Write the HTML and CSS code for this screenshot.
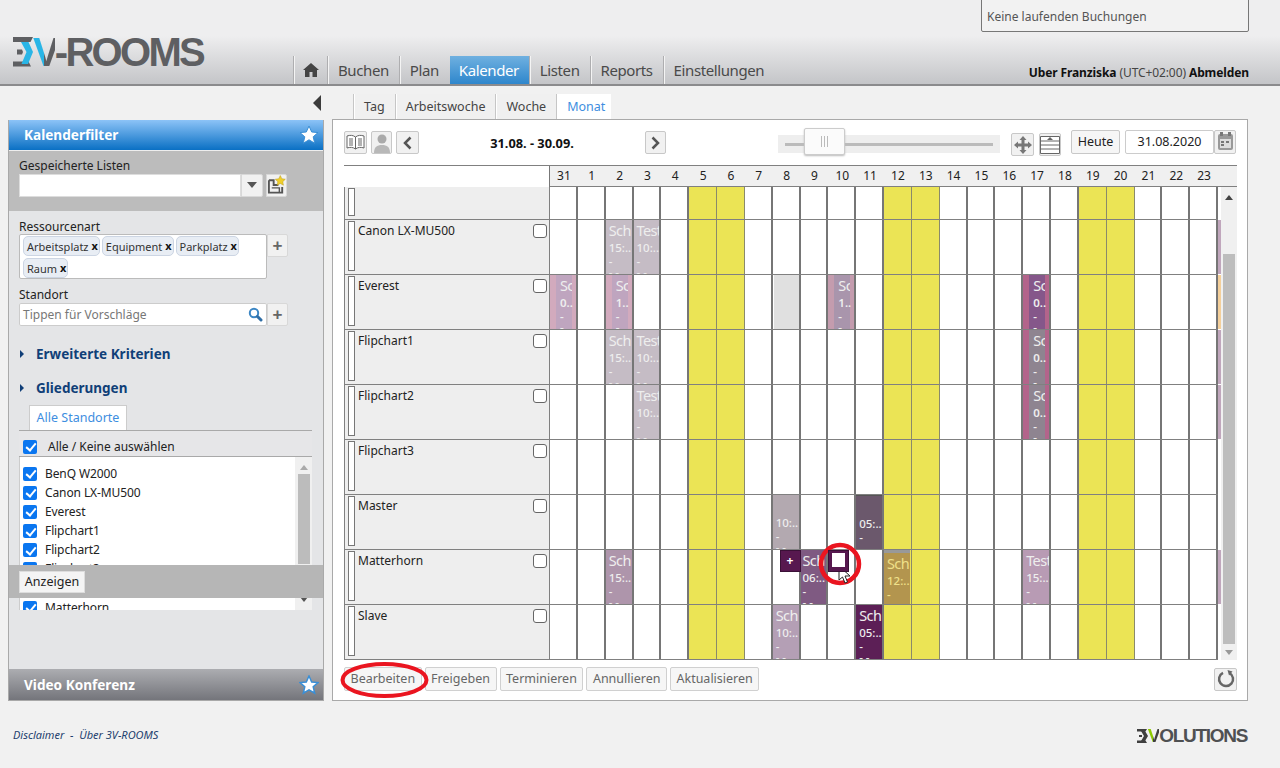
FILE: index.html
```html
<!DOCTYPE html>
<html lang="de">
<head>
<meta charset="utf-8">
<title>3V-ROOMS Kalender</title>
<link rel="stylesheet" href="styles.css">
</head>
<body>
<header class="hdr">
  <div class="logo">
    <svg class="logo-mark" width="20" height="30" viewBox="0 0 20 30"><path fill="#5e5f62" d="M0 0h20l-2.500 5H0zM0 24.500h15.500l2.500 5H0zM4 12.500h5l1 2.500-1 2.500H4z"/><path fill="#29b5e6" d="M8 5h7.500l4.500 10-5 12H8.500l5-12z"/></svg>
    <span class="logo-text"><span class="v-cyan">V</span>-ROOMS</span>
  </div>
  <nav class="nav">
    <a class="nav-home"><svg width="16" height="14" viewBox="0 0 16 14"><path fill="#444" d="M8 0l8 7h-2v7H9.500V9h-3v5H2V7H0z"/></svg></a>
    <a>Buchen</a><a>Plan</a><a class="on">Kalender</a><a>Listen</a><a>Reports</a><a>Einstellungen</a>
  </nav>
  <div class="hdr-right">
    <div class="running">Keine laufenden Buchungen</div>
    <div class="user"><b>Uber Franziska</b> (UTC+02:00) <b>Abmelden</b></div>
  </div>
</header>

<div class="content">
  <aside class="side">
    <div class="collapse"><span class="tri"></span></div>
    <div class="side-panel">
      <div class="bar bar-blue"><span>Kalenderfilter</span><svg class="star" width="20" height="20" viewBox="0 0 20 20"><path fill="#fff" stroke="#3a8fd6" stroke-width="1" d="M10 1l2.700 6 6.300.600-4.800 4.200 1.500 6.400L10 14.800 4.300 18.200l1.500-6.400L1 7.600 7.300 7z"/></svg></div>
      <div class="saved">
        <label>Gespeicherte Listen</label>
        <div class="row">
          <div class="inp inp-saved"></div>
          <div class="btn-sq btn-drop"><span class="caret"></span></div>
          <div class="btn-sq btn-save"><svg width="20" height="20" viewBox="0 0 20 20"><path fill="none" stroke="#555" stroke-width="2" d="M2 5h5v5h5M2 5v13h14v-6"/><path fill="none" stroke="#555" stroke-width="1.500" d="M5 13h8v5"/><path fill="#f0cf2c" stroke="#b89a1a" stroke-width=".5" d="M14 0l1.600 3.400 3.700.5-2.700 2.600.7 3.700L14 8.400l-3.300 1.800.7-3.700-2.700-2.600 3.700-.5z"/></svg></div>
        </div>
      </div>
      <div class="side-body">
        <label class="lb-res">Ressourcenart</label>
        <div class="row">
          <div class="tagbox">
            <span class="tag">Arbeitsplatz <b>x</b></span><span class="tag">Equipment <b>x</b></span><span class="tag">Parkplatz <b>x</b></span><span class="tag">Raum <b>x</b></span>
          </div>
          <div class="btn-sq btn-plus">+</div>
        </div>
        <label class="lb-loc">Standort</label>
        <div class="row">
          <div class="inp inp-loc"><span>Tippen für Vorschläge</span><svg width="15" height="15" viewBox="0 0 15 15"><circle cx="6" cy="6" r="4.200" fill="none" stroke="#3b86c4" stroke-width="2"/><path stroke="#2f6ea6" stroke-width="3" stroke-linecap="round" d="M9.500 9.500l3.500 3.500"/></svg></div>
          <div class="btn-sq btn-plus">+</div>
        </div>
        <div class="acc acc-1"><span class="acc-tri"></span>Erweiterte Kriterien</div>
        <div class="acc acc-2"><span class="acc-tri"></span>Gliederungen</div>
        <div class="loc-tab">Alle Standorte</div>
        <div class="all-row"><span class="cb"></span><span>Alle / Keine auswählen</span></div>
        <div class="list">
          <div class="items">
            <div class="item"><span class="cb"></span>BenQ W2000</div>
            <div class="item"><span class="cb"></span>Canon LX-MU500</div>
            <div class="item"><span class="cb"></span>Everest</div>
            <div class="item"><span class="cb"></span>Flipchart1</div>
            <div class="item"><span class="cb"></span>Flipchart2</div>
            <div class="item"><span class="cb"></span>Flipchart3</div>
            <div class="item"><span class="cb"></span>Master</div>
            <div class="item"><span class="cb"></span>Matterhorn</div>
          </div>
          <div class="list-sb"><span class="arr-up"></span><span class="list-thumb"></span><span class="arr-dn"></span></div>
        </div>
        <div class="band"><button class="btn-show">Anzeigen</button></div>
      </div>
      <div class="bar bar-grey"><span>Video Konferenz</span><svg class="star" width="20" height="20" viewBox="0 0 20 20"><path fill="#fff" stroke="#3a8fd6" stroke-width="1.500" d="M10 1l2.700 6 6.300.600-4.800 4.200 1.500 6.400L10 14.800 4.300 18.200l1.500-6.400L1 7.600 7.300 7z"/></svg></div>
    </div>
  </aside>

  <main class="main">
    <div class="tabs"><a>Tag</a><a>Arbeitswoche</a><a>Woche</a><a class="on">Monat</a></div>
    <section class="panel">
      <div class="toolbar">
        <div class="ib"><svg width="19" height="17" viewBox="0 0 19 17"><path fill="#fff" stroke="#666" d="M1 2c3-1 6-1 8.500 1 2.500-2 5.500-2 8.500-1v12c-3-1-6-1-8.500 1C7 13 4 13 1 14z"/><path stroke="#666" d="M9.500 3v12M12 5h4M12 7h4M12 9h4M12 11h4M3 5h4M3 7h4M3 9h4M3 11h4"/></svg></div>
        <div class="ib ib-p"><svg width="18" height="20" viewBox="0 0 18 20"><circle cx="9" cy="6" r="4.500" fill="#aaa"/><path fill="#b8b8b8" d="M1 20c0-6 3-8 8-8s8 2 8 8z"/></svg></div>
        <div class="ib"><svg width="9" height="14" viewBox="0 0 9 14"><path fill="none" stroke="#555" stroke-width="2.500" d="M7.500 1.500L2 7l5.500 5.500"/></svg></div>
        <div class="range">31.08. - 30.09.</div>
        <div class="ib ib-next"><svg width="9" height="14" viewBox="0 0 9 14"><path fill="none" stroke="#555" stroke-width="2.500" d="M1.500 1.500L7 7l-5.500 5.500"/></svg></div>
        <div class="slider"><span class="track"></span><span class="thumb"><i></i><i></i><i></i></span></div>
        <div class="ib ib-move"><svg width="18" height="18" viewBox="0 0 18 18"><path fill="#777" d="M9 0l3.500 4H10.500v3.500H14V5.500L18 9l-4 3.500V10.500h-3.500V14h2L9 18l-3.500-4h2v-3.500H4v2L0 9l4-3.500v2h3.500V4h-2z"/></svg></div>
        <div class="ib ib-list"><svg width="20" height="20" viewBox="0 0 20 20"><path fill="#fff" stroke="#666" d="M.5 1.500h19v17H.5z"/><path stroke="#666" d="M.5 6h19M.5 10h19M.5 14h19"/><path fill="#666" d="M10 2l3 3H7z"/></svg></div>
        <button class="btn-today">Heute</button>
        <div class="date">31.08.2020</div>
        <div class="ib ib-cal"><svg width="17" height="19" viewBox="0 0 17 19"><rect x="1" y="2" width="15" height="16" rx="2" fill="#999"/><rect x="3" y="7" width="11" height="9" fill="#ddd"/><path fill="#777" d="M3 0h3v4H3zM11 0h3v4h-3zM4 9h3v2H4zM9 9h3v2H9zM4 12h3v2H4z"/></svg></div>
      </div>

      <div class="cal">
        <div class="days-head">
          <span>31</span><span>1</span><span>2</span><span>3</span><span>4</span><span>5</span><span>6</span><span>7</span><span>8</span><span>9</span><span>10</span><span>11</span><span>12</span><span>13</span><span>14</span><span>15</span><span>16</span><span>17</span><span>18</span><span>19</span><span>20</span><span>21</span><span>22</span><span>23</span>
        </div>
        <div class="corner"></div>
        <div class="lines">
          <i></i><i></i><i></i><i></i><i></i><i class="we"></i><i class="we"></i><i></i><i></i><i></i><i></i><i></i><i class="we"></i><i class="we"></i><i></i><i></i><i></i><i></i><i></i><i class="we"></i><i class="we"></i><i></i><i></i><i></i>
        </div>

        <div class="res r2"><span class="grip"></span></div>
        <div class="res r3"><span class="grip"></span><span class="nm">Canon LX-MU500</span><span class="chk"></span></div>
        <div class="res r4"><span class="grip"></span><span class="nm">Everest</span><span class="chk"></span></div>
        <div class="res r5"><span class="grip"></span><span class="nm">Flipchart1</span><span class="chk"></span></div>
        <div class="res r6"><span class="grip"></span><span class="nm">Flipchart2</span><span class="chk"></span></div>
        <div class="res r7"><span class="grip"></span><span class="nm">Flipchart3</span><span class="chk"></span></div>
        <div class="res r8"><span class="grip"></span><span class="nm">Master</span><span class="chk"></span></div>
        <div class="res r9"><span class="grip"></span><span class="nm">Matterhorn</span><span class="chk"></span></div>
        <div class="res r10"><span class="grip"></span><span class="nm">Slave</span><span class="chk"></span></div>

        <div class="ev grey" style="grid-area:3/4"><b>Sch</b><i>15:..</i><i>-</i><i>- -</i></div>
        <div class="ev grey" style="grid-area:3/5"><b>Test</b><i>10:..</i><i>-</i><i>- -</i></div>
        <div class="ev pink narrow" style="grid-area:4/2"><b>Sch</b><i>0..</i><i>-</i><i>-</i></div>
        <div class="ev pink narrow" style="grid-area:4/4"><b>Sch</b><i>1..</i><i>-</i><i>-</i></div>
        <div class="ev blocked" style="grid-area:4/10"></div>
        <div class="ev pink2 narrow" style="grid-area:4/12"><b>Sch</b><i>1..</i><i>-</i><i>-</i></div>
        <div class="ev dark narrow" style="grid-area:4/19"><b>Sch</b><i>0..</i><i>-</i><i>-</i></div>
        <div class="ev grey" style="grid-area:5/4"><b>Sch</b><i>15:..</i><i>-</i><i>- -</i></div>
        <div class="ev grey" style="grid-area:5/5"><b>Test</b><i>10:..</i><i>-</i><i>- -</i></div>
        <div class="ev mix narrow" style="grid-area:5/19"><b>Sch</b><i>0..</i><i>-</i><i>-</i></div>
        <div class="ev grey" style="grid-area:6/5"><b>Test</b><i>10:..</i><i>-</i><i>- -</i></div>
        <div class="ev mix narrow" style="grid-area:6/19"><b>Sch</b><i>0..</i><i>-</i><i>-</i></div>
        <div class="ev silver" style="grid-area:8/10"><b></b><i>10:..</i><i>-</i><i>- -</i></div>
        <div class="ev plum" style="grid-area:8/13"><b></b><i>05:..</i><i>-</i><i>- -</i></div>
        <div class="ev mauve" style="grid-area:9/4"><b>Sch</b><i>15:..</i><i>-</i><i>- -</i></div>
        <div class="ev purple" style="grid-area:9/11"><b>Sch</b><i>06:..</i><i>-</i><i>- -</i></div>
        <div class="ev gold" style="grid-area:9/14"><b>Sch</b><i>12:..</i><i>-</i><i>- -</i></div>
        <div class="ev mauve2" style="grid-area:9/19"><b>Test</b><i>15:..</i><i>-</i><i>- -</i></div>
        <div class="ev lilac" style="grid-area:10/10"><b>Sch</b><i>10:..</i><i>-</i><i>- -</i></div>
        <div class="ev deep" style="grid-area:10/13"><b>Sch</b><i>05:..</i><i>-</i><i>- -</i></div>

        <div class="mini mini-add" style="grid-area:9/10">+</div>
        <div class="mini mini-sel" style="grid-area:9/12"><span></span></div>

        <div class="sliver s-grey" style="grid-area:3/26"></div>
        <div class="sliver s-org" style="grid-area:4/26"></div>
        <div class="sliver s-grey" style="grid-area:5/26"></div>
        <div class="sliver s-grey" style="grid-area:6/26"></div>
        <div class="sliver s-grey" style="grid-area:9/26"></div>

        <div class="rl r2"></div><div class="rl r3"></div><div class="rl r4"></div><div class="rl r5"></div><div class="rl r6"></div><div class="rl r7"></div><div class="rl r8"></div><div class="rl r9"></div><div class="rl r10"></div>

        <div class="cal-sb"><span class="arr-up"></span><span class="cal-thumb"></span><span class="arr-dn"></span></div>
      </div>

      <div class="actions">
        <button>Bearbeiten</button><button>Freigeben</button><button>Terminieren</button><button>Annullieren</button><button>Aktualisieren</button>
        <div class="ib ib-refresh"><svg width="18" height="18" viewBox="0 0 18 18"><path fill="none" stroke="#666" stroke-width="2.500" d="M6 2.800A7 7 0 1 0 12.500 3"/><path fill="#666" d="M10.500 0l5 1.500-3.500 4z"/></svg></div>
      </div>

      <svg class="mark mark-circle" width="46" height="46" viewBox="0 0 46 46"><circle cx="23" cy="23" r="19" fill="none" stroke="#ea1520" stroke-width="4.500"/></svg>
      <svg class="mark mark-cursor" width="14" height="20" viewBox="0 0 14 20"><path fill="#fff" stroke="#222" d="M1 1v14l3.500-3 2.500 6 2.500-1-2.500-6H12z"/></svg>
      <svg class="mark mark-ellipse" width="92" height="38" viewBox="0 0 92 38"><ellipse cx="44.500" cy="19" rx="42" ry="16" fill="none" stroke="#ea1520" stroke-width="4"/></svg>
    </section>
  </main>
</div>

<footer class="foot">
  <div class="foot-links">Disclaimer &nbsp;-&nbsp; Über 3V-ROOMS</div>
  <div class="logo2">
    <svg width="11" height="14" viewBox="0 0 11 14"><path fill="#3f3f3f" d="M0 0h10L8.500 2.500H0zM0 11.500h8.500L10 14H0zM2 6h3v2H2z"/><path fill="#3f3f3f" d="M4 2h4l3 5-3 5H4l3-5z"/></svg>
    <span><span class="v-green">V</span>OLUTIONS</span>
  </div>
</footer>
</body>
</html>
```
FILE: styles.css
```css
*{box-sizing:border-box}
html,body{margin:0;height:768px;overflow:hidden}
body{background:#f1f1f1;font:12px/16px "Noto Sans",sans-serif;color:#222}
label{display:block}
button{font:inherit}

/* header */
.hdr{height:86px;display:flex;align-items:flex-end;border-bottom:2px solid #8b8b8d;background:linear-gradient(#eeeeef 0,#eeeeef 36px,#c4c5c8 84px)}
.logo{width:293px;flex:none;align-self:flex-start;display:flex;align-items:flex-start;padding:37px 0 0 13px}
.logo-mark{flex:none}
.logo-text{font:bold 40px/30px "Liberation Sans",sans-serif;letter-spacing:-2.700px;color:#5e5f62}
.v-cyan{background:linear-gradient(90deg,#29b5e6 50%,#5e5f62 50%);-webkit-background-clip:text;background-clip:text;color:transparent}
.nav{display:flex;height:28px}
.nav a{display:flex;align-items:center;padding:0 10px 0 9px;font-size:15px;color:#4a4a4a;border-left:1px solid #f4f4f4;box-shadow:-1px 0 0 #aeaeb0;margin-left:1px;letter-spacing:-.4px}
.nav a.on{background:linear-gradient(#6fb0e0,#2e86cc);color:#fff;border-left:0;box-shadow:none;padding:0 10px 0 9px}
.nav a.nav-home{width:33px;padding:0;justify-content:center}
.hdr-right{margin-left:auto;align-self:stretch;display:flex;flex-direction:column;justify-content:space-between;align-items:flex-end;padding-right:31px}
.running{width:268px;height:33px;margin:-1px 0 0;padding:9px 5px 0;background:#f2f2f2;border:1px solid #777;border-radius:0 0 2px 2px;color:#555}
.user{padding-bottom:3px;white-space:nowrap;color:#444;letter-spacing:-.1px}
.user b{color:#111}

/* layout */
.content{display:flex;height:615px}
.side{width:316px;margin-left:8px;flex:none;display:flex;flex-direction:column}
.main{width:916px;margin-left:8px;flex:none;display:flex;flex-direction:column}

/* sidebar */
.collapse{height:34px;display:flex;justify-content:flex-end;align-items:center;padding-right:3px}
.tri{width:0;height:0;border:8px solid transparent;border-left:0;border-right:8px solid #3c3c3c}
.side-panel{height:582px;border:1px solid #a9a9a9;border-top:0;display:flex;flex-direction:column;background:#e4e5e7}
.bar{flex:none;display:flex;align-items:center;justify-content:space-between;padding:0 4px 0 15px;color:#fff;font-weight:700;font-size:13.600px;height:31px}
.bar-blue{background:linear-gradient(#8cc3f7,#0a70c4);border-bottom:1px solid #eee}
.bar-grey{background:linear-gradient(#acadb1,#74757b);padding-top:1px}
.saved{flex:none;height:60px;background:#bcbcbc;padding:7px 10px 0}
.row{display:flex}
.inp{height:23px;background:#fff;box-shadow:0 0 0 1px #ddd inset}
.inp-saved{width:222px}
.btn-sq{height:23px;background:#f1f1f1;border:1px solid #d8d8d8;border-radius:0 2px 2px 0;display:flex;align-items:center;justify-content:center;flex:none}
.btn-drop{width:22px}
.caret{width:0;height:0;border:5px solid transparent;border-top:6px solid #555;border-bottom:0}
.btn-save{width:21px;margin-left:3px}
.side-body{position:relative;flex:1;padding:8px 10px 0}
.lb-res{height:15px}
.tagbox{width:248px;height:45px;background:#fff;border:1px solid #bbb;border-radius:2px;padding:1px 3px;display:flex;flex-wrap:wrap;align-content:flex-start;gap:2px}
.tag{height:20px;line-height:17px;background:#e8edf4;border:1px solid #ccd5e3;border-radius:5px;padding:0 1px 0 3px;white-space:nowrap;font-size:11px;color:#333}
.tag b{color:#111;font-size:11px;vertical-align:1px}
.btn-plus{width:21px;font:bold 17px/1 "Liberation Sans",sans-serif;color:#666}
.lb-loc{margin-top:8px;height:16px}
.inp-loc{width:248px;display:flex;align-items:center;justify-content:space-between;padding:1px 4px 0;color:#777;border-radius:2px;box-shadow:0 0 0 1px #ccc inset}
.acc{display:flex;align-items:center;font-size:13.500px;font-weight:700;color:#103f78;height:20px}
.acc-1{margin-top:18px}
.acc-2{margin-top:14px}
.acc-tri{width:0;height:0;border:4px solid transparent;border-right:0;border-left:4px solid #103f78;margin-right:12px;margin-left:1px}
.loc-tab{width:98px;height:26px;margin:7px 0 0 10px;padding-top:4px;text-align:center;background:#fff;color:#3e8ee0;border:1px solid #ccc;border-bottom:0;font-size:12.500px}
.all-row{width:293px;height:27px;display:flex;align-items:center;gap:11px;padding:7px 0 0 4px;border:1px solid #a9a9a9;border-width:1px 0;background:#e6e6e8;margin-top:-1px}
.list{width:293px;height:153px;background:#fff;display:flex;overflow:hidden;border-left:1px solid #ccc}
.items{flex:1;padding-top:7px}
.item{height:19.200px;display:flex;align-items:center;gap:8px;padding-left:3px;letter-spacing:-.1px}
.cb{width:14px;height:14px;flex:none;border-radius:2px;background:#0a76f0;position:relative}
.cb::after{content:"";position:absolute;left:5px;top:1.500px;width:4px;height:8px;border:solid #fff;border-width:0 2px 2px 0;transform:rotate(40deg)}
.list-sb{width:17px;flex:none;background:#f0f0f0;display:flex;flex-direction:column;align-items:center}
.arr-up{width:0;height:0;border:4px solid transparent;border-bottom:5px solid #aaa;border-top:0;margin-top:8px;flex:none}
.list-thumb{width:12px;height:90px;margin-top:4px;background:#bcbcbc}
.arr-dn{width:0;height:0;border:4px solid transparent;border-top:5px solid #555;border-bottom:0;margin-top:auto;margin-bottom:8px;flex:none}
.band{position:absolute;left:0;right:0;top:354px;height:33px;background:#b6b6b6;padding:6px 10px}
.btn-show{width:66px;height:22px;padding:0;background:#f4f4f4;border:1px solid #ddd;color:#222;font-size:12.500px}

/* tabs */
.tabs{display:flex;height:26px;margin-top:8px;padding-left:22px;gap:1px}
.tabs a{display:flex;align-items:center;padding:0 10px 0 9px;background:#f0f0f0;border-left:1px solid #fff;box-shadow:-1px 0 0 #c6c6c6;color:#444;font-size:12.500px}
.tabs a.on{background:#fff;color:#3e8ee0;padding-right:6px}

/* panel */
.panel{position:relative;height:582px;margin-top:-1px;background:#fff;border:1px solid #a9a9a9;padding:0 11px}
.toolbar{height:45px;display:flex;align-items:center}
.ib{width:23px;height:23px;flex:none;display:flex;align-items:center;justify-content:center;background:#f1f1f1;border:1px solid #c8c8c8;border-radius:2px}
.ib-p{width:21px;margin:0 4px}
.ib-next{width:21px}
.range{width:227px;text-align:center;font-weight:700;font-size:12.800px;color:#111}
.slider{position:relative;flex:none;width:222px;height:18px;margin:3px 11px 0 112px;background:#eee;display:flex;align-items:center;padding:0 7px}
.track{flex:1;height:3px;background:#bbb}
.thumb{position:absolute;left:26px;top:-7px;width:41px;height:27px;background:#fbfbfb;border:1px solid #ccc;border-radius:2px;box-shadow:0 1px 2px #bbb;display:flex;justify-content:center;align-items:center;gap:2px}
.thumb i{width:1px;height:11px;background:#bbb}
.ib-move{margin-top:4px}
.ib-list{width:22px;margin:4px 10px 0 5px}
.btn-today{width:49px;height:24px;padding:0;background:#f6f6f6;border:1px solid #c8c8c8;border-radius:2px;color:#222;flex:none;margin-top:-2px;font-size:12.500px}
.date{width:89px;height:24px;margin:-2px 0 0 5px;line-height:22px;text-align:center;border:1px solid #ccc;border-radius:2px;color:#222;flex:none;font-size:12.500px}
.ib-cal{height:24px;margin-top:-2px;width:22px}

/* calendar grid */
.cal{display:grid;width:893px;height:495px;grid-template-columns:206px repeat(24,minmax(0,1fr)) 3px 16px;grid-template-rows:21px 33px repeat(8,55px);border-top:1px solid #808080}
.corner{grid-area:1/1;border-right:1px solid #777;background:#fff}
.days-head{grid-area:1/2/2/28;display:grid;grid-template-columns:repeat(24,minmax(0,1fr));background:#f0f0f0;border-bottom:1px solid #808080;padding-right:19px}
.days-head span{text-align:center;line-height:19px}
.lines{grid-area:2/2/11/26;display:grid;grid-template-columns:repeat(24,minmax(0,1fr));background:#fff}
.lines i{border-right:2px solid #767676}
.lines i.we{background:#ebe455;border-right:1px solid #8a8a6a}
.res{grid-column:1;display:flex;align-items:flex-start;background:#eee;border:solid #808080;border-width:0 1px 1px 1px;padding:1px 2px 0 3px}
.grip{width:7px;height:calc(100% - 3px);background:#fff;border:1px solid #777;flex:none}
.nm{margin:2px 0 0 3px;line-height:16px;color:#222}
.chk{width:14px;height:14px;margin:3px 0 0 auto;background:#fff;border:1px solid #666;border-radius:3px;flex:none}
.r2{grid-row:2}.r3{grid-row:3}.r4{grid-row:4}.r5{grid-row:5}.r6{grid-row:6}.r7{grid-row:7}.r8{grid-row:8}.r9{grid-row:9}.r10{grid-row:10}
.rl{grid-column:2/26;border-bottom:1px solid #808080;pointer-events:none}

/* events */
.ev{margin:0 2px 1px 0;overflow:hidden;padding-left:3px;color:#eee;display:flex;flex-direction:column;white-space:nowrap}
.ev b{font-weight:400;font-size:14.500px;line-height:20px;height:20px;flex:none;letter-spacing:-.6px}
.ev i{font-style:normal;font-weight:500;font-size:11.500px;line-height:15px;flex:none}
.ev i:nth-child(3){line-height:14px}
.ev i:nth-child(4){line-height:14px;margin-top:-3px}
.grey{background:#c5bcc5}
.pink{background:linear-gradient(90deg,#d2aabd 0 6px,#bfa5bf 6px 22px,#d2aabd 22px)}
.pink2{background:linear-gradient(90deg,#c49cae 0 6px,#a995ac 6px 22px,#c49cae 22px)}
.dark{background:linear-gradient(90deg,#b3648b 0 6px,#85578a 6px 22px,#b3648b 22px)}
.mix{background:linear-gradient(90deg,#b3648b 0 6px,#8e8490 6px 22px,#b3648b 22px)}
.narrow{padding-left:10px;padding-right:4px}
.narrow b{overflow:hidden}
.narrow i{font-weight:600}
.blocked{background:#e0e0e0;margin-left:1px}
.silver{background:#b3a9b0}
.plum{background:#6b586c;border-top:1px solid #555}
.mauve{background:#ae95ab}
.mauve2{background:#b89bb4}
.purple{background:#7f5a82;padding-left:2px}
.gold{background:#b3954e;color:#efe08a;border-top:3px solid #999}
.lilac{background:#b49fb5}
.deep{background:#5c1f56}
.mini{justify-self:end;align-self:start;width:21px;height:22px;background:#57184f;border:1px solid #3a1036;color:#fff;font-weight:700;line-height:20px;text-align:center;z-index:1}
.mini-sel{justify-self:start;display:flex;align-items:flex-start;justify-content:center;padding-top:2px}
.mini-sel span{width:13px;height:14px;background:#fff}
.sliver{margin-bottom:1px}
.s-grey{background:#c0a6bc}
.s-org{background:#f4cf9a}
.cal-sb{grid-area:2/27/11/28;display:flex;flex-direction:column;align-items:center;background:#f0f0f0}
.cal-sb .arr-up{border-bottom-color:#444;margin-top:8px}
.cal-thumb{width:12px;height:390px;margin-top:auto;background:#bdbdbd}
.cal-sb .arr-dn{border-top-color:#999;margin:6px 0 5px}

/* bottom */
.actions{display:flex;align-items:center;gap:3px;margin-top:7px;width:893px}
.actions button{height:24px;padding:0 5.500px;background:#f6f6f6;border:1px solid #d0d0d0;border-radius:2px;color:#666;font-size:12.500px}
.ib-refresh{margin-left:auto}

/* annotations */
.mark{position:absolute}
.mark-circle{left:484px;top:421px}
.mark-cursor{left:505px;top:445px}
.mark-ellipse{left:7px;top:541px}

/* footer */
.foot{display:flex;justify-content:space-between;align-items:center;height:67px;padding:0 33px 0 13px}
.foot-links{font-style:italic;font-size:11px;color:#1e3f6e}
.logo2{display:flex;align-items:center;margin-top:3px;font:bold 19px/18px "Liberation Sans",sans-serif;letter-spacing:-1.300px;color:#4f5052}
.v-green{background:linear-gradient(90deg,#8cc800 50%,#3f3f3f 50%);-webkit-background-clip:text;background-clip:text;color:transparent}
```
